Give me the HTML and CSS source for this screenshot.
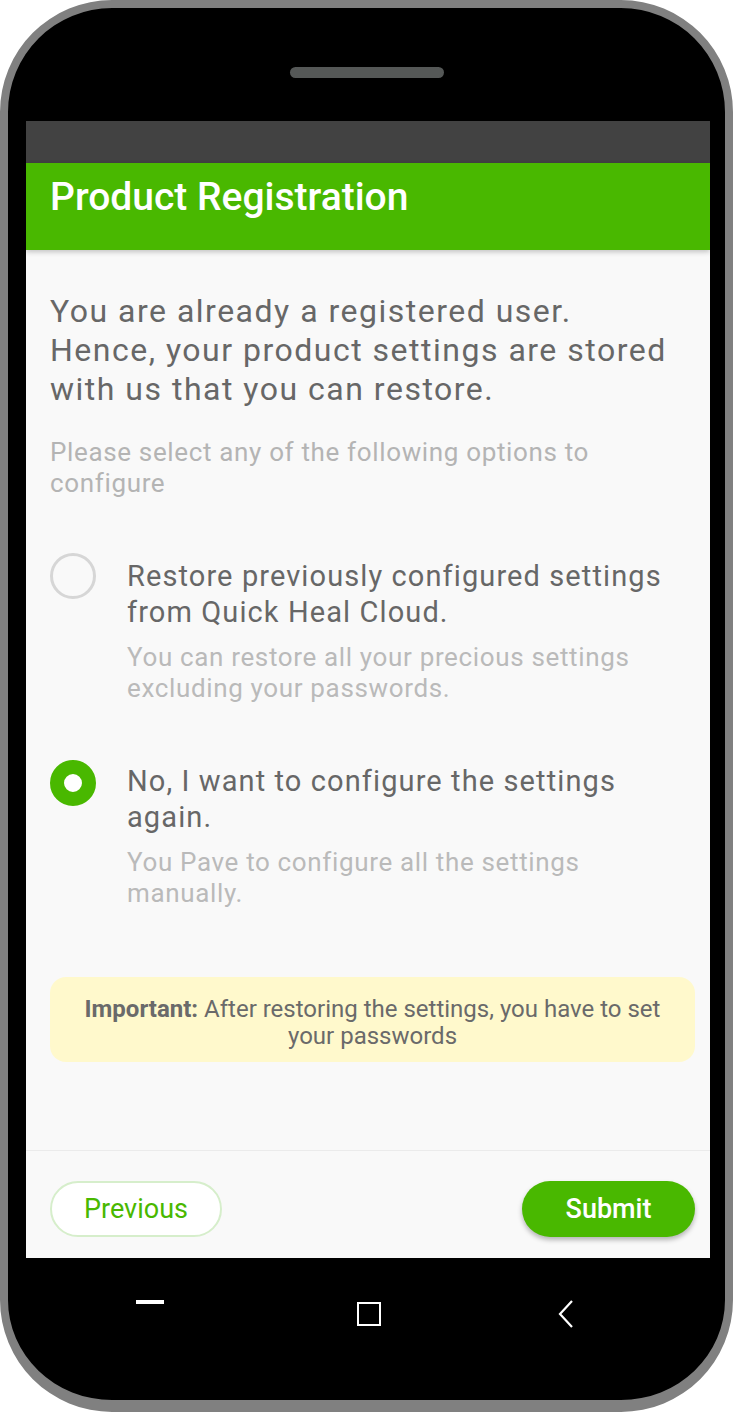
FILE: index.html
```html
<!DOCTYPE html>
<html lang="en">
<head>
    <meta charset="UTF-8">
    <meta name="viewport" content="width=device-width, initial-scale=1.0">
    <title>Product Registration</title>
    <link rel="stylesheet" href="styles.css">
</head>
<body>
    <div class="phone">
        <div class="speaker"></div>

        <div class="screen">
            <div class="status-bar"></div>

            <header class="app-bar">
                <h1>Product Registration</h1>
            </header>

            <main class="content">
                <p class="lead">You are already a registered user.<br>Hence, your product settings are stored with us that you can restore.</p>
                <p class="hint">Please select any of the following options to configure</p>

                <div class="options">
                    <label class="option">
                        <span class="radio"></span>
                        <span class="option-text">
                            <span class="option-title">Restore previously configured settings from Quick Heal Cloud.</span>
                            <span class="option-desc">You can restore all your precious settings excluding your passwords.</span>
                        </span>
                    </label>

                    <label class="option">
                        <span class="radio checked"></span>
                        <span class="option-text">
                            <span class="option-title">No, I want to configure the settings again.</span>
                            <span class="option-desc">You Pave to configure all the settings manually.</span>
                        </span>
                    </label>
                </div>

                <div class="notice">
                    <b>Important:</b> After restoring the settings, you have to set your passwords
                </div>
            </main>

            <footer class="actions">
                <button class="btn btn-outline">Previous</button>
                <button class="btn btn-primary">Submit</button>
            </footer>
        </div>

        <nav class="nav-bar">
            <span class="nav-recent"></span>
            <span class="nav-home"></span>
            <svg class="nav-back" width="16" height="28" viewBox="0 0 16 28">
                <polyline points="14,1 2,14 14,27" fill="none" stroke="#fff" stroke-width="2.2"/>
            </svg>
        </nav>
    </div>
</body>
</html>
```

FILE: styles.css
```css
body {
    margin: 0;
    padding: 0;
    background: #fff;
    font-family: Roboto, "Liberation Sans", sans-serif;
}

.phone {
    box-sizing: border-box;
    width: 733px;
    height: 1412px;
    background: #000;
    border: 8px solid #808080;
    border-bottom-width: 12px;
    border-radius: 112px;
    padding-top: 59px;
    display: flex;
    flex-direction: column;
}

.speaker {
    width: 154px;
    height: 11px;
    margin: 0 auto 43px;
    background: #555857;
    border-radius: 6px;
}

.screen {
    width: 684px;
    height: 1137px;
    margin-left: 18px;
    background: #f9f9f9;
    display: flex;
    flex-direction: column;
}

.status-bar {
    height: 42px;
    background: #424242;
}

.app-bar {
    height: 87px;
    box-sizing: border-box;
    padding: 15px 24px 0;
    background: #49b800;
    box-shadow: 0 2px 5px rgba(0, 0, 0, 0.22);
    position: relative;
}

.app-bar h1 {
    margin: 0;
    color: #fff;
    font-size: 39px;
    line-height: 39px;
    font-weight: 500;
}

.content {
    flex: 1;
    padding: 42px 15px 0 24px;
}

.lead {
    margin: 0;
    color: #676767;
    font-size: 32px;
    line-height: 39px;
    letter-spacing: 1.5px;
}

.hint {
    margin: 28px 0 0;
    color: #b4b4b4;
    font-size: 26px;
    line-height: 31px;
    letter-spacing: 0.65px;
}

.options {
    margin-top: 59px;
    display: flex;
    flex-direction: column;
    gap: 59px;
}

.option {
    display: flex;
    align-items: flex-start;
    gap: 31px;
}

.radio {
    flex: none;
    box-sizing: border-box;
    width: 46px;
    height: 46px;
    margin-top: -5px;
    border: 3px solid #d6d6d6;
    border-radius: 50%;
}

.radio.checked {
    margin-top: -3px;
    border: 14px solid #49b800;
    background: #fff;
}

.option-text {
    display: flex;
    flex-direction: column;
    gap: 12px;
}

.option-title {
    color: #676767;
    font-size: 29px;
    line-height: 36px;
    letter-spacing: 1.1px;
}

.option-desc {
    color: #bababa;
    font-size: 26px;
    line-height: 31px;
    letter-spacing: 0.65px;
}

.notice {
    margin-top: 68px;
    padding: 19px 20px 12px;
    background: #fff9cc;
    border-radius: 16px;
    color: #6a6a6a;
    font-size: 24px;
    line-height: 27px;
    text-align: center;
}

.notice b {
    font-weight: 700;
}

.actions {
    height: 108px;
    box-sizing: border-box;
    padding: 30px 15px 0 24px;
    border-top: 1px solid #ebebeb;
    display: flex;
    justify-content: space-between;
    align-items: flex-start;
}

.btn {
    height: 56px;
    border-radius: 28px;
    font-family: Roboto, "Liberation Sans", sans-serif;
    font-size: 27px;
    cursor: pointer;
}

.btn-outline {
    width: 172px;
    background: #fff;
    border: 2px solid #d6eecb;
    color: #49b800;
}

.btn-primary {
    width: 173px;
    background: #49b800;
    border: none;
    color: #fff;
    font-weight: 500;
    box-shadow: 0 3px 5px rgba(0, 0, 0, 0.28);
}

.nav-bar {
    flex: 1;
    display: flex;
    align-items: flex-start;
    padding: 44px 0 0 128px;
}

.nav-recent {
    width: 28px;
    height: 4px;
    background: #fff;
    margin: -2px 193px 0 0;
}

.nav-home {
    box-sizing: border-box;
    width: 24px;
    height: 24px;
    border: 2.5px solid #fff;
    margin-right: 177px;
}

.nav-back {
    margin-top: -2px;
}
```
